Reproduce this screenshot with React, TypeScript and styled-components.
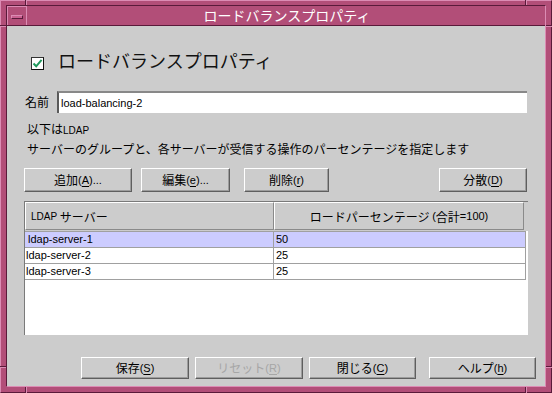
import React from 'react';
import styled, { createGlobalStyle } from 'styled-components';

const JP = `"Noto Sans CJK JP", "DejaVu Sans", sans-serif`;
const LAT = `"Liberation Sans", Arial, "Noto Sans CJK JP", sans-serif`;

const PINK = '#b24e78';
const PINK_LIGHT = '#dc8cb4';
const PINK_DARK = '#5a1a3a';

const Global = createGlobalStyle`
  html, body { margin: 0; padding: 0; width: 552px; height: 393px; overflow: hidden; background: #cccccc; }
  * { box-sizing: border-box; }
`;

const Frame = styled.div`
  position: relative;
  width: 552px;
  height: 393px;
  background: ${PINK};
  border: 1px solid;
  border-color: ${PINK_LIGHT} ${PINK_DARK} ${PINK_DARK} ${PINK_LIGHT};
  padding: 4px 5px 5px 5px;
  display: flex;
`;

const Tick = styled.span<{ $x: number; $y: number; $w: number; $h: number; $vertical?: boolean }>`
  position: absolute;
  left: ${p => p.$x}px;
  top: ${p => p.$y}px;
  width: ${p => p.$w}px;
  height: ${p => p.$h}px;
  ${p => p.$vertical
    ? `border-left: 1px solid ${PINK_DARK}; border-right: 1px solid ${PINK_LIGHT};`
    : `border-top: 1px solid ${PINK_DARK}; border-bottom: 1px solid ${PINK_LIGHT};`}
`;

const Inner = styled.div`
  flex: 1;
  min-width: 0;
  display: flex;
  flex-direction: column;
  border: 1px solid;
  border-color: ${PINK_DARK} ${PINK_LIGHT} ${PINK_LIGHT} ${PINK_DARK};
`;

const TitleBar = styled.div`
  height: 20px;
  display: flex;
  background: ${PINK};
  border-bottom: 1px solid ${PINK_DARK};
`;

const MenuButton = styled.div`
  width: 20px;
  height: 19px;
  display: flex;
  align-items: center;
  justify-content: center;
  border-top: 1px solid ${PINK_LIGHT};
  border-left: 1px solid ${PINK_LIGHT};
  border-right: 1px solid ${PINK_LIGHT};
`;

const MenuBar = styled.div`
  width: 12px;
  height: 4px;
  margin-top: 1px;
  background: #c96090;
  border: 1px solid;
  border-color: ${PINK_LIGHT} ${PINK_DARK} ${PINK_DARK} ${PINK_LIGHT};
`;

const TitleText = styled.div`
  flex: 1;
  display: flex;
  align-items: center;
  justify-content: center;
  color: #ffffff;
  font-family: ${JP};
  font-size: 14px;
  line-height: 19px;
  padding-left: 2px;
`;

const Body = styled.div`
  flex: 1;
  background: #cccccc;
  display: flex;
  flex-direction: column;
  padding: 0 17px;
  color: #000;
`;

const HeadingRow = styled.div`
  margin-top: 24px;
  height: 26px;
  display: flex;
  align-items: center;
  padding-left: 7px;
  gap: 14px;
`;

const CheckBox = styled.div`
  width: 13px;
  height: 13px;
  background: #ffffff;
  border: 1px solid;
  border-color: #333333 #111111 #111111 #333333;
  display: flex;
  align-items: center;
  justify-content: center;
`;

const Heading = styled.div`
  font-family: ${JP};
  font-size: 18px;
  line-height: 24px;
  color: #111;
  margin-bottom: 6px;
`;

const NameRow = styled.div`
  margin-top: 15px;
  display: flex;
  align-items: center;
  height: 22px;
  padding-left: 1px;
`;

const FieldLabel = styled.label`
  width: 32px;
  font-family: ${JP};
  font-size: 12px;
  margin-top: -2px;
`;

const TextField = styled.div`
  flex: 1;
  height: 22px;
  margin-right: 1px;
  background: #ffffff;
  border-top: 2px solid #888888;
  border-left: 2px solid #5a5a5a;
  display: flex;
  align-items: center;
  padding-left: 2px;
  font-family: ${LAT};
  font-size: 11px;
`;

const Desc = styled.div`
  margin-top: 7px;
  padding-left: 3px;
  font-family: ${JP};
  font-size: 12px;
  line-height: 18px;
`;

const Small = styled.span`
  font-family: ${LAT};
  font-size: 10px;
`;

const ButtonRow = styled.div`
  margin-top: 10px;
  display: flex;
  align-items: center;
`;

const Btn = styled.button<{ $w: number; $h?: number; $ml?: number; $auto?: boolean; $mr?: number }>`
  width: ${p => p.$w}px;
  height: ${p => p.$h ?? 24}px;
  margin-left: ${p => (p.$auto ? 'auto' : `${p.$ml ?? 0}px`)};
  margin-right: ${p => p.$mr ?? 0}px;
  flex-shrink: 0;
  background: #cccccc;
  border: 1px solid;
  border-color: #ffffff #5e5e5e #5e5e5e #ffffff;
  box-shadow: inset -1px -1px 0 #9c9c9c;
  padding: 0 0 1px 0;
  display: flex;
  align-items: center;
  justify-content: center;
  color: ${p => (p.disabled ? '#a6a6a6' : '#000000')};
  font-family: ${JP};
  font-size: 12px;
  cursor: default;
`;

const Mn = styled.span`
  font-family: ${LAT};
  font-size: 11px;
  u { text-decoration: underline; text-underline-offset: 2px; }
`;

const Table = styled.div`
  margin-top: 9px;
  height: 134px;
  background: #ffffff;
  border-top: 1px solid #7a7a7a;
  border-left: 1px solid #7a7a7a;
  display: flex;
  flex-direction: column;
`;

const HeaderRow = styled.div`
  height: 29px;
  display: flex;
  background: #cccccc;
  padding-right: 3px;
`;

const HeaderCell = styled.div<{ $w: number; $center?: boolean }>`
  width: ${p => p.$w}px;
  height: 28px;
  display: flex;
  align-items: center;
  justify-content: ${p => (p.$center ? 'center' : 'flex-start')};
  padding-left: ${p => (p.$center ? 0 : 5)}px;
  border-top: 1px solid #ffffff;
  border-left: 1px solid #ffffff;
  border-right: 1px solid #8a8a8a;
  border-bottom: 1px solid #8a8a8a;
  font-family: ${JP};
  font-size: 12px;
`;

const Rows = styled.div`
  width: 501px;
  border-top: 1px solid #a0a0a0;
  border-right: 1px solid #a0a0a0;
`;

const Row = styled.div<{ $selected?: boolean }>`
  height: 16px;
  display: flex;
  background: ${p => (p.$selected ? '#ccccff' : '#ffffff')};
  border-bottom: 1px solid #a0a0a0;
`;

const Cell = styled.div<{ $w?: number; $pad?: number }>`
  ${p => (p.$w ? `width: ${p.$w}px; border-right: 1px solid #a0a0a0;` : 'flex: 1;')}
  padding-left: ${p => p.$pad ?? 1}px;
  display: flex;
  align-items: center;
  font-family: ${LAT};
  font-size: 11px;
  line-height: 15px;
`;

const BottomRow = styled.div`
  margin-top: 22px;
  margin-right: -8px;
  display: flex;
  justify-content: flex-end;
`;

const Check = () => (
  <svg width="11" height="11" viewBox="0 0 11 11">
    <path d="M1.5 5.5 L4.2 8.3 L9.6 1.8" fill="none" stroke="#1f9a5e" strokeWidth="2" />
  </svg>
);

const rows = [
  { name: 'ldap-server-1', pct: '50', selected: true },
  { name: 'ldap-server-2', pct: '25' },
  { name: 'ldap-server-3', pct: '25' },
];

export default function App() {
  return (
    <>
      <Global />
      <Frame>
        <Tick $x={24} $y={-1} $w={2} $h={5} $vertical />
        <Tick $x={524} $y={-1} $w={2} $h={5} $vertical />
        <Tick $x={24} $y={386} $w={2} $h={6} $vertical />
        <Tick $x={524} $y={386} $w={2} $h={6} $vertical />
        <Tick $x={-1} $y={24} $w={6} $h={2} />
        <Tick $x={-1} $y={365} $w={6} $h={2} />
        <Tick $x={545} $y={24} $w={6} $h={2} />
        <Tick $x={545} $y={365} $w={6} $h={2} />
        <Inner>
          <TitleBar>
            <MenuButton>
              <MenuBar />
            </MenuButton>
            <TitleText>ロードバランスプロパティ</TitleText>
          </TitleBar>
          <Body>
            <HeadingRow>
              <CheckBox>
                <Check />
              </CheckBox>
              <Heading>ロードバランスプロパティ</Heading>
            </HeadingRow>
            <NameRow>
              <FieldLabel>名前</FieldLabel>
              <TextField>load-balancing-2</TextField>
            </NameRow>
            <Desc>
              <div>
                以下は<Small>LDAP</Small>
              </div>
              <div>サーバーのグループと、各サーバーが受信する操作のパーセンテージを指定します</div>
            </Desc>
            <ButtonRow>
              <Btn $w={108}>
                追加<Mn>(<u>A</u>)...</Mn>
              </Btn>
              <Btn $w={89} $ml={9}>
                編集<Mn>(<u>e</u>)...</Mn>
              </Btn>
              <Btn $w={85} $ml={14}>
                削除<Mn>(<u>r</u>)</Mn>
              </Btn>
              <Btn $w={88} $auto $mr={1}>
                分散<Mn>(<u>D</u>)</Mn>
              </Btn>
            </ButtonRow>
            <Table>
              <HeaderRow>
                <HeaderCell $w={249}>
                  <Small>LDAP</Small>&nbsp;サーバー
                </HeaderCell>
                <HeaderCell $w={250} $center>
                  ロードパーセンテージ&nbsp;<Mn>(</Mn>合計<Mn>=100)</Mn>
                </HeaderCell>
              </HeaderRow>
              <Rows>
                {rows.map(r => (
                  <Row key={r.name} $selected={r.selected}>
                    <Cell $w={249} $pad={r.selected ? 3 : 1}>
                      {r.name}
                    </Cell>
                    <Cell $pad={2}>{r.pct}</Cell>
                  </Row>
                ))}
              </Rows>
            </Table>
            <BottomRow>
              <Btn $w={108} $h={22}>
                保存<Mn>(<u>S</u>)</Mn>
              </Btn>
              <Btn $w={108} $h={22} $ml={6} disabled>
                リセット<Mn>(<u>R</u>)</Mn>
              </Btn>
              <Btn $w={107} $h={22} $ml={6}>
                閉じる<Mn>(<u>C</u>)</Mn>
              </Btn>
              <Btn $w={107} $h={22} $ml={13}>
                ヘルプ<Mn>(<u>h</u>)</Mn>
              </Btn>
            </BottomRow>
          </Body>
        </Inner>
      </Frame>
    </>
  );
}
